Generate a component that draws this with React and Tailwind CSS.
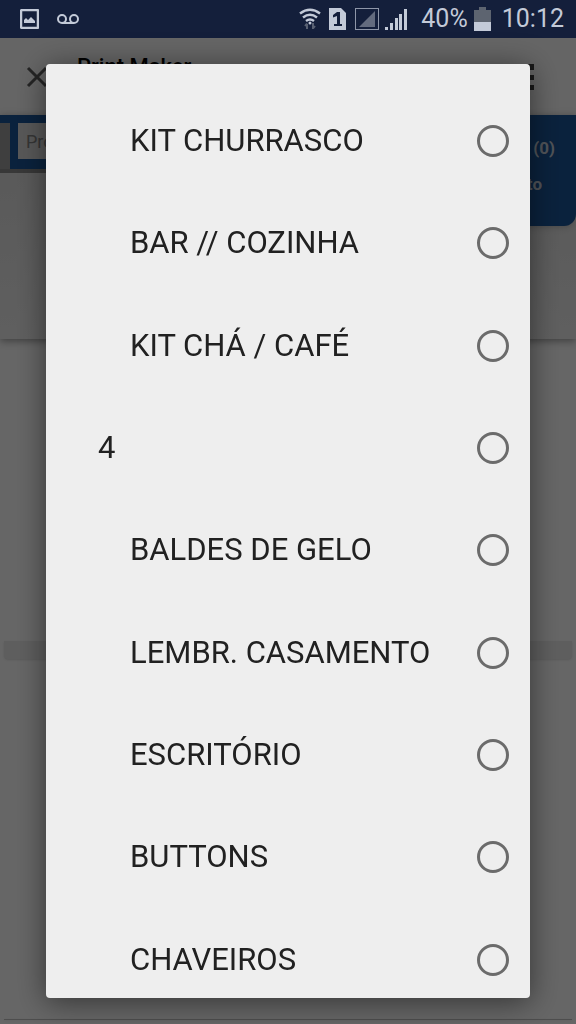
import { useState } from "react";

const categories = [
  { id: "kit-churrasco", label: "KIT CHURRASCO", nested: true },
  { id: "bar-cozinha", label: "BAR // COZINHA", nested: true },
  { id: "kit-cha-cafe", label: "KIT CHÁ / CAFÉ", nested: true },
  { id: "4", label: "4", nested: false },
  { id: "baldes-de-gelo", label: "BALDES DE GELO", nested: true },
  { id: "lembr-casamento", label: "LEMBR. CASAMENTO", nested: true },
  { id: "escritorio", label: "ESCRITÓRIO", nested: true },
  { id: "buttons", label: "BUTTONS", nested: true },
  { id: "chaveiros", label: "CHAVEIROS", nested: true },
];

function StatusBar() {
  return (
    <header className="flex h-[38px] shrink-0 items-center justify-between bg-[#141f3b] pr-3 pl-5 text-[#c3cad8]">
      <div className="flex items-center gap-[18px]">
        {/* Picture notification */}
        <svg width="19" height="20" viewBox="0 0 19 20" fill="none">
          <rect x="1" y="1" width="17" height="18" rx="1" stroke="currentColor" strokeWidth="2.500" />
          <path d="M4 14v-3l2-2 2 2 3-3 4 4v2z" fill="currentColor" />
        </svg>
        {/* Voicemail */}
        <svg width="22" height="10" viewBox="0 0 22 10" fill="none" stroke="currentColor" strokeWidth="2">
          <circle cx="5" cy="5" r="4" />
          <circle cx="17" cy="5" r="4" />
          <path d="M5 9h12" />
        </svg>
      </div>

      <div className="flex items-center">
        {/* Wi-Fi */}
        <svg width="22" height="22" viewBox="0 0 22 22" fill="none" stroke="currentColor" strokeWidth="2.500">
          <path d="M1 5.500Q11-2 21 5.500" />
          <path d="M4 9.500q7-5.500 14 0" />
          <path d="M7 13q4-3 8 0" />
          <circle cx="11" cy="15" r="1.500" fill="currentColor" stroke="none" />
          <path d="M8 21v-5M6 18l2-2.500M14 15v6M16 18l-2 2.500" stroke="#596173" strokeWidth="2" />
        </svg>
        {/* SIM card */}
        <svg className="ml-2" width="17" height="22" viewBox="0 0 17 22">
          <path d="M0 0h12l5 5v17H0z" fill="currentColor" />
          <path d="M4 7l4-3h3v12h2v2H5v-2h3V8L4 9.500z" fill="#141f3b" />
        </svg>
        {/* No signal on the second line */}
        <svg className="ml-[9px]" width="24" height="22" viewBox="0 0 24 22">
          <rect x="0.500" y="0.500" width="23" height="21" fill="none" stroke="#8e96a8" />
          <path d="M4 19L20 3v16z" fill="#636b7e" />
        </svg>
        {/* Signal bars */}
        <svg className="ml-[6px]" width="22" height="22" viewBox="0 0 22 22" fill="currentColor">
          <path d="M0 19h3v3H0zM5 15h3v7H5zM10 10h3v12h-3zM14 6h3v16h-3zM19 1h3v21h-3z" />
        </svg>
        <span className="ml-[14px] font-[Roboto] text-[25px] leading-8">40%</span>
        {/* Battery */}
        <svg className="ml-[6px]" width="17" height="24" viewBox="0 0 17 24">
          <path d="M5 0h7v3h5v13H0V3h5z" fill="#5d6470" />
          <path d="M0 15h17v9H0z" fill="currentColor" />
        </svg>
        <span className="ml-[11px] font-[Roboto] text-[25px] leading-8">10:12</span>
      </div>
    </header>
  );
}

function StorePage() {
  return (
    <main className="flex flex-1 flex-col bg-white">
      <div className="flex h-[77px] shrink-0 items-center bg-[#fcfcfc] pr-[42px] pl-[26px]">
        <button aria-label="Fechar" className="text-[#5c5c5c]">
          <svg width="22" height="22" viewBox="0 0 22 22" stroke="currentColor" strokeWidth="3">
            <path d="M2 2l18 18M20 2L2 20" />
          </svg>
        </button>
        <h1 className="mb-5 ml-[29px] flex-1 font-[Roboto] text-[22px] leading-7 font-medium text-black">
          Print Maker
        </h1>
        <button aria-label="Menu" className="text-[#404040]">
          <svg width="14" height="30" viewBox="0 0 14 30" fill="currentColor">
            <path d="M8 2h6v6H8zM8 13h6v5H8zM8 23h6v5H8z" />
          </svg>
        </button>
      </div>

      <section className="flex h-[224px] shrink-0 items-start bg-linear-to-b from-[#dcdcdc] to-[#eeeeee] shadow-[0_2px_8px_#999]">
        <div className="flex h-[58px] flex-1 border-t-8 border-b-4 border-t-[#1a5598] border-b-[#8c8c8c] bg-[#9e9e9e] pl-[10px]">
          <form className="flex flex-1 bg-[#1a5598] px-2 pb-2">
            <input
              type="search"
              aria-label="Procurar"
              placeholder="Procurar"
              className="h-9 w-full bg-[#dcdcdc] px-2 font-[Roboto] text-lg placeholder:text-[#858585]"
            />
          </form>
        </div>
        <a
          href="#carrinho"
          className="flex h-[111px] w-[200px] flex-col items-end rounded-br-xl bg-[#1a5598] pt-5 font-[Roboto] text-[17px] leading-[26px] font-bold text-[#c8d0dc] shadow-md"
        >
          <span className="pr-[21px]">Carrinho (0)</span>
          <span className="pt-[10px] pr-[34px]">Orçamento</span>
        </a>
      </section>

      <section className="flex flex-1 flex-col px-1">
        <div className="h-[302px]" />
        <div className="h-[18px] rounded-b bg-[#ececec] shadow" />
        <div className="mx-8 flex-1" />
        <div className="mb-1 h-px bg-[#c0c0c0] shadow" />
      </section>
    </main>
  );
}

function CategoryDialog() {
  const [selected, setSelected] = useState("");

  return (
    <div className="fixed inset-x-0 top-[38px] bottom-0 flex bg-black/60 px-[46px] pt-[26px] pb-[26px]">
      <div
        role="dialog"
        aria-label="Categorias"
        className="flex flex-1 flex-col overflow-hidden rounded-[4px] bg-[#eeeeee] pt-[26px] shadow-[0_4px_30px_0_rgba(0,0,0,0.5)]"
      >
        {/* The list runs past the bottom edge, the last row is cut off */}
        <ul className="-mb-[13px] flex flex-1 flex-col">
          {categories.map((category) => (
            <li key={category.id} className="flex flex-1">
              <label
                className={`flex flex-1 items-center justify-between pr-[21px] font-[Roboto] text-[31px] leading-10 text-[#212121] ${
                  category.nested ? "pl-[84px]" : "pl-[52px]"
                }`}
              >
                {category.label}
                <input
                  type="radio"
                  name="category"
                  value={category.id}
                  checked={selected === category.id}
                  onChange={() => setSelected(category.id)}
                  className="size-8 appearance-none rounded-full border-[3px] border-[#6b6b6b] checked:border-[10px]"
                />
              </label>
            </li>
          ))}
        </ul>
      </div>
    </div>
  );
}
export default function App() {
  return (
    <div className="flex min-h-screen flex-col">
      <StatusBar />
      <StorePage />
      <CategoryDialog />
    </div>
  );
}
